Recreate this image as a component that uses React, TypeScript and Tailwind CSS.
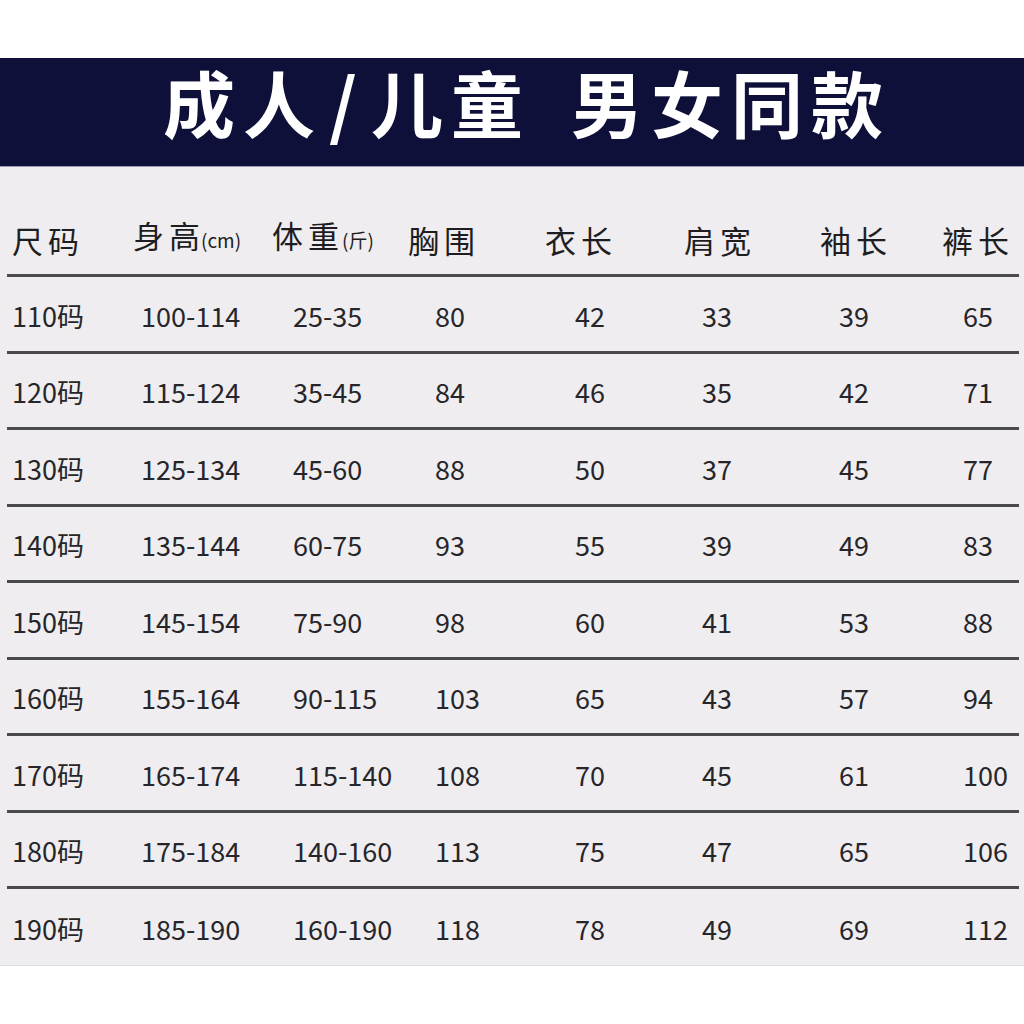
import React from "react";

const rows: string[][] = [
  ["110码", "100-114", "25-35", "80", "42", "33", "39", "65"],
  ["120码", "115-124", "35-45", "84", "46", "35", "42", "71"],
  ["130码", "125-134", "45-60", "88", "50", "37", "45", "77"],
  ["140码", "135-144", "60-75", "93", "55", "39", "49", "83"],
  ["150码", "145-154", "75-90", "98", "60", "41", "53", "88"],
  ["160码", "155-164", "90-115", "103", "65", "43", "57", "94"],
  ["170码", "165-174", "115-140", "108", "70", "45", "61", "100"],
  ["180码", "175-184", "140-160", "113", "75", "47", "65", "106"],
  ["190码", "185-190", "160-190", "118", "78", "49", "69", "112"],
];

const pads = ["pl-0", "pl-[8px]", "pl-[21px]", "pl-[27px]", "pl-[30px]", "pl-[18px]", "pl-[19px]", "pl-[21px]"];

const grid = "grid grid-cols-[121px_139px_136px_137px_139px_136px_122px_1fr] ml-[7px] mr-[5px] pl-[5px]";

export default function App() {
  return (
    <div
      className="w-[1024px] h-[1024px] bg-white overflow-hidden"
      style={{ fontFamily: '"Noto Sans CJK SC", "Noto Sans", sans-serif' }}
    >
      <div className="h-[58px]" />
      <div className="h-[109px] bg-[#0e1039] border-b border-[#9a9bb0] flex items-center justify-center pl-[30px]">
        <span className="text-white text-[72px] font-bold leading-none tracking-[8px] pb-[22px]">
          成人<span className="mx-[6px]">/</span>儿童
        </span>
        <span className="text-white text-[72px] font-bold leading-none tracking-[8px] pb-[22px] ml-[40px]">男女同款</span>
      </div>
      <div className="bg-[#efedef] h-[799px] border-b border-[#dcdbe0]">
        <div className={`${grid} h-[110px] items-end pb-[14px] border-b-[3px] border-[#4a4a4e] text-[#1e1e22] text-[31px] leading-[40px] tracking-[5px]`}>
          <div>尺码</div>
          <div className="flex items-baseline">
            <span>身高</span>
            <span className="text-[19px] tracking-[0px] -ml-[4px]">(cm)</span>
          </div>
          <div className="flex items-baseline">
            <span>体重</span>
            <span className="text-[19px] tracking-[0px] -ml-[2px]">(斤)</span>
          </div>
          <div>胸围</div>
          <div>衣长</div>
          <div>肩宽</div>
          <div>袖长</div>
          <div>裤长</div>
        </div>
        {rows.map((r, i) => (
          <div
            key={i}
            className={`${grid} h-[76.5px] items-center pt-[4px] text-[#26262a] text-[27px] leading-[36px] ${
              i < rows.length - 1 ? "border-b-[3px] border-[#4a4a4e]" : ""
            }`}
          >
            {r.map((c, j) => (
              <div key={j} className={pads[j]}>
                {c}
              </div>
            ))}
          </div>
        ))}
      </div>
    </div>
  );
}
